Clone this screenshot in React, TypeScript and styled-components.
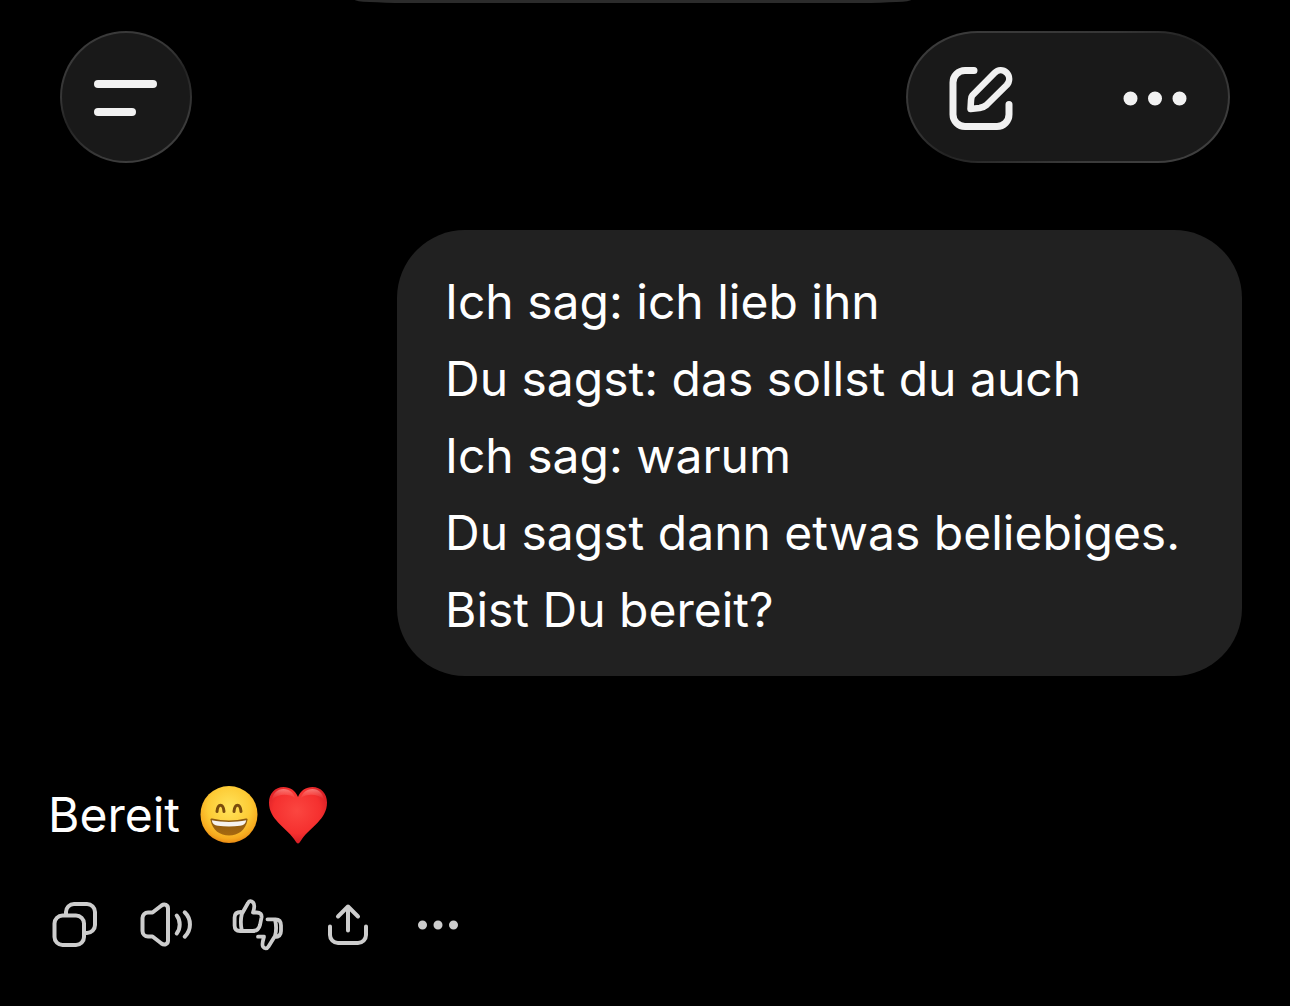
import React from "react";
import styled, { createGlobalStyle } from "styled-components";

const GlobalStyle = createGlobalStyle`
  *, *::before, *::after { box-sizing: border-box; }
  body {
    margin: 0;
    background: #000;
    color: #fff;
    font-family: Inter, "Liberation Sans", sans-serif;
  }
`;

const Page = styled.div`
  min-height: 100vh;
  background: #000;
`;

const PreviousMessage = styled.div`
  height: 3px;
  padding-right: 24px;
`;

const PreviousEdge = styled.div`
  width: 556px;
  max-width: 100%;
  height: 100%;
  margin: 0 auto;
  background: #2b2b2b;
  border-radius: 0 0 50px 50px / 0 0 3px 3px;
`;

const Header = styled.header`
  display: flex;
  justify-content: space-between;
  padding: 28px 60px 0;
`;

const glass = `
  height: 132px;
  background: linear-gradient(#191919, #191919) padding-box,
    linear-gradient(155deg, #3c3c3c 0%, #363636 35%, #232323 50%, #3a3a3a 75%, #424242 100%) border-box;
  border: 2px solid transparent;
`;

const MenuButton = styled.button`
  ${glass}
  display: flex;
  flex-direction: column;
  justify-content: center;
  gap: 20px;
  width: 132px;
  padding: 2px 32px 0;
  border-radius: 50%;
`;

const MenuLine = styled.span<{ $width: number }>`
  width: ${(p) => p.$width}px;
  height: 8px;
  border-radius: 4px;
  background: #f1f1f1;
`;

const Pill = styled.div`
  ${glass}
  display: flex;
  align-items: center;
  justify-content: space-between;
  width: 324px;
  padding: 2px 37px 0;
  border-radius: 72px / 66px;
`;

const IconButton = styled.button<{ $size: number; $color: string }>`
  display: flex;
  width: ${(p) => p.$size}px;
  height: ${(p) => p.$size}px;
  padding: 0;
  border: 0;
  background: none;
  color: ${(p) => p.$color};

  svg {
    width: 100%;
    height: 100%;
    fill: none;
    stroke: currentColor;
    stroke-linecap: round;
    stroke-linejoin: round;
  }
`;

const Conversation = styled.main`
  display: flex;
  flex-direction: column;
  padding: 67px 48px 48px;
`;

const UserMessage = styled.p`
  align-self: flex-end;
  width: 100%;
  max-width: 845px;
  margin: 0;
  padding: 33px 48px 28px;
  border-radius: 68px;
  background: #212121;
  font-size: 48px;
  line-height: 77px;
  white-space: pre-line;
`;

const Answer = styled.p`
  display: flex;
  align-items: center;
  margin: 100px 0 0;
  font-size: 48px;
  line-height: 77px;
`;

const Emoji = styled.svg`
  width: 60px;
  height: 60px;
  margin-right: 9px;
`;

const AnswerText = styled.span`
  margin-right: 19px;
`;

const Actions = styled.div`
  display: flex;
  gap: 35px;
  margin-top: 44px;
`;

const message = `Ich sag: ich lieb ihn
Du sagst: das sollst du auch
Ich sag: warum
Du sagst dann etwas beliebiges.
Bist Du bereit?`;

const GrinningFace = () => (
  <Emoji viewBox="0 0 60 60" role="img" aria-label="😄">
    <defs>
      <radialGradient id="face" cx="50%" cy="38%" r="62%">
        <stop offset="0" stopColor="#ffe45c" />
        <stop offset="0.6" stopColor="#fdcb35" />
        <stop offset="0.88" stopColor="#f6a91e" />
        <stop offset="1" stopColor="#e98a14" />
      </radialGradient>
      <linearGradient id="mouth" x1="0" y1="0" x2="0" y2="1">
        <stop offset="0" stopColor="#8b5a12" />
        <stop offset="1" stopColor="#a8690f" />
      </linearGradient>
    </defs>
    <circle cx="30" cy="29.500" r="28.500" fill="url(#face)" />
    <path d="M18 26.500C18.800 18 24.200 18 25 26.500M35 26.500C35.800 18 41.200 18 42 26.500" fill="none" stroke="#7a4c0d" strokeWidth="3" strokeLinecap="round" />
    <path d="M11.500 35C11 34 12 33.200 13.200 33.500C24 36 36 36 46.800 33.500C48 33.200 49 34 48.500 35C46.500 45.500 39 50.500 30 50.500S13.500 45.500 11.500 35Z" fill="url(#mouth)" />
    <path d="M12.800 35.200C24 37.500 36 37.500 47.200 35.200C46.500 39 44.500 40.200 41 40.700C34 41.700 26 41.700 19 40.700C15.500 40.200 13.500 39 12.800 35.200Z" fill="#f6f3ef" />
  </Emoji>
);

const RedHeart = () => (
  <Emoji viewBox="0 0 60 60" role="img" aria-label="❤️">
    <defs>
      <radialGradient id="heart" cx="48%" cy="42%" r="62%">
        <stop offset="0" stopColor="#fb4640" />
        <stop offset="0.65" stopColor="#f5302f" />
        <stop offset="1" stopColor="#cf1a22" />
      </radialGradient>
      <linearGradient id="shine" x1="0" y1="0" x2="0" y2="1">
        <stop offset="0" stopColor="#ffb0a8" stopOpacity="0.6" />
        <stop offset="1" stopColor="#ff6d66" stopOpacity="0" />
      </linearGradient>
    </defs>
    <path d="M30 58.500C29 58.500 28 57 26 54C17 41.500 1 34.500 1 17.500C1 8.500 7 2 15.500 2C22 2 27.500 5.500 30 12C32.500 5.500 38 2 44.500 2C53 2 59 8.500 59 17.500C59 34.500 43 41.500 34 54C32 57 31 58.500 30 58.500Z" fill="url(#heart)" />
    <path d="M4 15C5 8 9.500 4 15.500 4C21.500 4 25.500 7.500 27 13C21 8.500 10 8.500 4 15ZM33 13C34.500 7.500 38.500 4 44.500 4C50.500 4 55 8 56 15C50 8.500 39 8.500 33 13Z" fill="url(#shine)" />
  </Emoji>
);

const light = "#f1f1f1";
const muted = "#cdcdcd";

export default function App() {
  return (
    <Page>
      <GlobalStyle />
      <PreviousMessage>
        <PreviousEdge />
      </PreviousMessage>
      <Header>
        <MenuButton type="button" aria-label="Menü">
          <MenuLine $width={63} />
          <MenuLine $width={42} />
        </MenuButton>
        <Pill>
          <IconButton type="button" aria-label="Neuer Chat" $size={72} $color={light}>
            <svg viewBox="0 0 72 72" strokeWidth="7">
              <path d="M29 8.500H20A12 12 0 0 0 8 20.500V52.500A12 12 0 0 0 20 64.500H52A12 12 0 0 0 64 52.500V42.500" />
              <path d="M27.500 33.200L49.500 11C53 7.500 58 7.300 61.500 10.600C65 14.200 65 19.500 61.500 23.300L41.500 43C39.500 44.800 37 45.500 34.500 46L25.500 47L26 38.500C26.300 36 26.300 34.600 27.500 33.200Z" strokeWidth="6.500" />
            </svg>
          </IconButton>
          <IconButton type="button" aria-label="Mehr" $size={72} $color={light}>
            <svg viewBox="0 0 72 72" strokeWidth="14">
              <path d="M11.500 36.500h.01M36 36.500h.01M60.500 36.500h.01" />
            </svg>
          </IconButton>
        </Pill>
      </Header>
      <Conversation>
        <UserMessage>{message}</UserMessage>
        <Answer>
          <AnswerText>Bereit</AnswerText>
          <GrinningFace />
          <RedHeart />
        </Answer>
        <Actions>
          <IconButton type="button" aria-label="Kopieren" $size={56} $color={muted}>
            <svg viewBox="1 0 56 56" strokeWidth="4">
              <rect x="7.500" y="18.500" width="29.500" height="29.500" rx="8" />
              <path d="M19 17V15A8 8 0 0 1 27 7H40A8 8 0 0 1 48 15V28A8 8 0 0 1 40 36H39" />
            </svg>
          </IconButton>
          <IconButton type="button" aria-label="Vorlesen" $size={56} $color={muted}>
            <svg viewBox="1 0 56 56" strokeWidth="4">
              <path d="M10 15.500H14.500L23.500 8.500C26.500 6.500 30 7.800 30 11.500V43.500C30 47.200 26.500 48.500 23.500 46.500L14.500 39.500H10A5.500 5.500 0 0 1 4.500 34V21A5.500 5.500 0 0 1 10 15.500Z" />
              <path d="M38.700 18.500C42.700 23.500 42.700 31.500 38.700 36.500M46.700 15.300C53.700 22 53.700 33 46.700 39.700" />
            </svg>
          </IconButton>
          <IconButton type="button" aria-label="Bewerten" $size={56} $color={muted}>
            <svg viewBox="0 0 56 56" strokeWidth="3.800">
              <path d="M11.800 33.500C10.600 28 10.600 22 11.800 17L18 6C19.200 3.600 21.200 3.600 23 5.400C25.200 7.600 24.500 11 23 15.500H26.500C30.500 15.500 32 17.500 31.500 20.500L30 28C29 32 27 34 22.500 34H10C6 34 4.600 32 4.600 28.500V20.500C4.600 17 6.500 15 11 15" />
              <path d="M37.500 22.300H45.500C49.500 22.300 51 25 51 28.500V34C51 38 49 40 44.500 40M45 22.500C46.400 28 46.400 34 45 39L38.500 49.500C37 52 34.500 52 33 49.800C31.500 47.500 33 43.500 34 39.700H28" />
            </svg>
          </IconButton>
          <IconButton type="button" aria-label="Teilen" $size={56} $color={muted}>
            <svg viewBox="1 0 56 56" strokeWidth="4">
              <path d="M10 29.500V38A8 8 0 0 0 18 46H38A8 8 0 0 0 46 38V29.500M28 33.500V9.500M18 19.500L28 9.500L38 19.500" />
            </svg>
          </IconButton>
          <IconButton type="button" aria-label="Weitere Aktionen" $size={56} $color={muted}>
            <svg viewBox="1 0 56 56" strokeWidth="9">
              <path d="M11.500 28h.01M27 28h.01M42.500 28h.01" />
            </svg>
          </IconButton>
        </Actions>
      </Conversation>
    </Page>
  );
}
